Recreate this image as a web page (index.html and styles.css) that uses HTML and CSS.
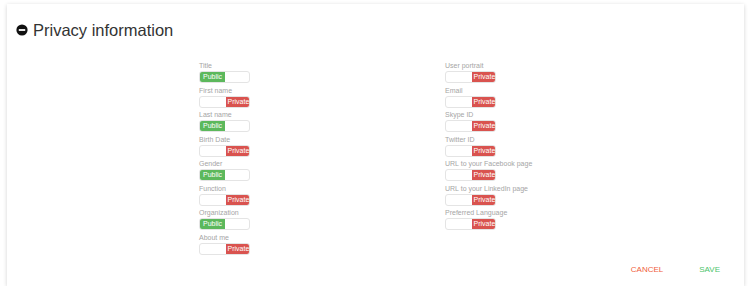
FILE: index.html
```html
<!DOCTYPE html>
<html>
<head>
<title>Privacy information</title>
<link rel="stylesheet" href="styles.css">
</head>
<body>
<div class="card">
  <div class="card-head">
    <svg class="ico" width="12" height="12" viewBox="0 0 12 12"><circle cx="6" cy="6" r="5.6" fill="#111"/><rect x="2.8" y="5.1" width="6.4" height="1.8" fill="#fff"/></svg>
    <h2>Privacy information</h2>
  </div>
  <div class="fields">
    <div class="col">
      <div class="field"><label>Title</label><div class="toggle pub"><span class="on">Public</span><span></span></div></div>
      <div class="field"><label>First name</label><div class="toggle priv"><span></span><span class="on">Private</span></div></div>
      <div class="field"><label>Last name</label><div class="toggle pub"><span class="on">Public</span><span></span></div></div>
      <div class="field"><label>Birth Date</label><div class="toggle priv"><span></span><span class="on">Private</span></div></div>
      <div class="field"><label>Gender</label><div class="toggle pub"><span class="on">Public</span><span></span></div></div>
      <div class="field"><label>Function</label><div class="toggle priv"><span></span><span class="on">Private</span></div></div>
      <div class="field"><label>Organization</label><div class="toggle pub"><span class="on">Public</span><span></span></div></div>
      <div class="field"><label>About me</label><div class="toggle priv"><span></span><span class="on">Private</span></div></div>
    </div>
    <div class="col">
      <div class="field"><label>User portrait</label><div class="toggle priv"><span></span><span class="on">Private</span></div></div>
      <div class="field"><label>Email</label><div class="toggle priv"><span></span><span class="on">Private</span></div></div>
      <div class="field"><label>Skype ID</label><div class="toggle priv"><span></span><span class="on">Private</span></div></div>
      <div class="field"><label>Twitter ID</label><div class="toggle priv"><span></span><span class="on">Private</span></div></div>
      <div class="field"><label>URL to your Facebook page</label><div class="toggle priv"><span></span><span class="on">Private</span></div></div>
      <div class="field"><label>URL to your LinkedIn page</label><div class="toggle priv"><span></span><span class="on">Private</span></div></div>
      <div class="field"><label>Preferred Language</label><div class="toggle priv"><span></span><span class="on">Private</span></div></div>
    </div>
  </div>
  <div class="actions">
    <button class="btn cancel">CANCEL</button>
    <button class="btn save">SAVE</button>
  </div>
</div>
</body>
</html>
```

FILE: styles.css
```css
body {
  margin: 0;
  background: #fff;
  font-family: "Liberation Sans", Arial, sans-serif;
}
.card {
  margin: 4px 6px 0 7px;
  height: 282px;
  box-sizing: border-box;
  background: #fff;
  box-shadow: 0 1px 4px rgba(0, 0, 0, 0.18);
  padding: 17px 0 0 0;
}
.card-head {
  display: flex;
  align-items: center;
  padding-left: 9px;
  height: 18px;
}
.ico {
  margin-right: 5px;
}
.card-head h2 {
  margin: 0;
  font-size: 16.5px;
  font-weight: normal;
  color: #333;
}
.fields {
  display: flex;
  padding-left: 192px;
  margin-top: 22px;
  height: 204px;
}
.col {
  width: 246px;
}
.field {
  height: 24.5px;
}
.field label {
  display: block;
  font-size: 7px;
  color: #a5a5a5;
  line-height: 9px;
  height: 10px;
}
.toggle {
  display: flex;
  width: 51px;
  height: 12px;
  box-sizing: border-box;
  border: 1px solid #e4e4e4;
  border-radius: 3px;
  overflow: hidden;
}
.toggle span {
  flex: 1;
  font-size: 7px;
  line-height: 10px;
  color: #fff;
  padding-left: 3px;
  white-space: nowrap;
}
.pub .on {
  background: #5cb85c;
  margin: -1px 0 -1px -1px;
  line-height: 12px;
  padding-left: 4px;
}
.priv .on {
  background: #d9534f;
  margin: -1px -1px -1px 0;
  line-height: 12px;
  padding-left: 2px;
}
.actions {
  display: flex;
  justify-content: flex-end;
  padding-right: 24px;
  gap: 36px;
}
.btn {
  background: none;
  border: 0;
  padding: 0;
  font-family: "Liberation Sans", Arial, sans-serif;
  font-size: 8px;
  cursor: pointer;
}
.cancel {
  color: #f0603c;
}
.save {
  color: #4cc46b;
}
```
